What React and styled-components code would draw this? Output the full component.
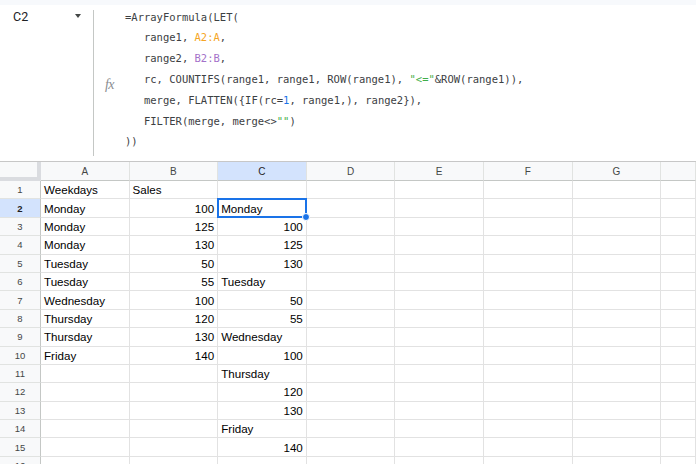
import React from "react";
import styled, { createGlobalStyle } from "styled-components";

const Global = createGlobalStyle`
  html, body { margin: 0; padding: 0; background: #fff; }
  body { width: 696px; height: 464px; overflow: hidden; font-family: "Liberation Sans", Arial, sans-serif; }
`;

const Page = styled.div`
  width: 696px;
  height: 464px;
  overflow: hidden;
  display: flex;
  flex-direction: column;
  background: #fff;
`;

const TopStrip = styled.div`
  height: 5px;
  background: #f7f9fc;
  flex: none;
`;

const FormulaBar = styled.div`
  height: 156px;
  flex: none;
  display: flex;
  align-items: stretch;
  background: #fff;
`;

const NameBox = styled.div`
  width: 93px;
  flex: none;
  display: flex;
  align-items: flex-start;
  justify-content: space-between;
  padding: 5px 12px 0 13px;
  box-sizing: border-box;
  font-family: "Roboto", "Liberation Sans", sans-serif;
  font-size: 12.5px;
  color: #202124;
  line-height: 14px;
`;

const Caret = styled.span`
  margin-top: 4px;
  width: 0;
  height: 0;
  border-left: 3.5px solid transparent;
  border-right: 3.5px solid transparent;
  border-top: 4px solid #444746;
`;

const Divider = styled.div`
  width: 1px;
  flex: none;
  margin: 5px 0 5px;
  background: #c4c7c5;
`;

const FxBox = styled.div`
  width: 31px;
  flex: none;
  display: flex;
  align-items: center;
  justify-content: center;
  padding-top: 3px;
  box-sizing: border-box;
  font-family: "Liberation Serif", "DejaVu Serif", serif;
  font-style: italic;
  font-size: 14px;
  color: #8a8d91;
  letter-spacing: -0.5px;
`;

const Formula = styled.pre`
  margin: 0;
  padding-top: 1.5px;
  font-family: "DejaVu Sans Mono", "Liberation Mono", monospace;
  font-size: 10.5px;
  line-height: 20.83px;
  color: #3c4043;
  white-space: pre;
`;

const Tok = styled.span`
  color: ${(p) =>
    p.$c === "orange" ? "#f5a524" : p.$c === "purple" ? "#a371c9" : p.$c === "green" ? "#3fae49" : p.$c === "blue" ? "#1a73e8" : "inherit"};
`;

const COLS = ["A", "B", "C", "D", "E", "F", "G", ""];

const Grid = styled.div`
  display: grid;
  grid-template-columns: 41px repeat(7, 88.6px) 1fr;
  grid-auto-rows: 18.4px;
  grid-template-rows: 19px;
  border-top: 1px solid #c7c7c7;
  font-family: "Liberation Sans", Arial, sans-serif;
`;

const Corner = styled.div`
  background: #f8f9fa;
  border-right: 4px solid #c4c7c5;
  border-bottom: 4px solid #c4c7c5;
  box-sizing: border-box;
  background-clip: padding-box;
  border-right-color: #dadce0;
  border-bottom-color: #dadce0;
  position: relative;
`;

const ColHead = styled.div`
  display: flex;
  align-items: center;
  justify-content: center;
  font-size: 10px;
  color: ${(p) => (p.$active ? "#0b57d0" : "#444746")};
  background: ${(p) => (p.$active ? "#d3e3fd" : "#f8f9fa")};
  border-right: 1px solid #e1e3e1;
  border-bottom: 1px solid #c4c7c5;
  box-sizing: border-box;
  ${(p) => (p.$active ? "color:#1f1f1f;" : "")}
`;

const RowHead = styled.div`
  display: flex;
  align-items: center;
  justify-content: center;
  font-size: 9.5px;
  font-weight: ${(p) => (p.$active ? 700 : 400)};
  color: ${(p) => (p.$active ? "#1f1f1f" : "#444746")};
  background: ${(p) => (p.$active ? "#d3e3fd" : "#f8f9fa")};
  border-right: 1px solid #c4c7c5;
  border-bottom: 1px solid #e1e3e1;
  box-sizing: border-box;
`;

const Cell = styled.div`
  position: relative;
  display: flex;
  align-items: center;
  justify-content: ${(p) => (p.$num ? "flex-end" : "flex-start")};
  padding: 0 3px 0 3px;
  font-size: 11.6px;
  color: #000;
  border-right: 1px solid #e2e2e2;
  border-bottom: 1px solid #e2e2e2;
  box-sizing: border-box;
  white-space: nowrap;
  overflow: visible;
`;

const Selection = styled.div`
  position: absolute;
  left: -1px;
  top: -1px;
  right: -1px;
  bottom: -1px;
  border: 2px solid #1a73e8;
  pointer-events: none;
  z-index: 2;
`;

const Handle = styled.div`
  position: absolute;
  right: -5px;
  bottom: -5px;
  width: 6px;
  height: 6px;
  border-radius: 50%;
  background: #1a73e8;
  border: 1px solid #fff;
  z-index: 3;
`;

const rows = [
  ["Weekdays", "Sales", ""],
  ["Monday", 100, "Monday"],
  ["Monday", 125, 100],
  ["Monday", 130, 125],
  ["Tuesday", 50, 130],
  ["Tuesday", 55, "Tuesday"],
  ["Wednesday", 100, 50],
  ["Thursday", 120, 55],
  ["Thursday", 130, "Wednesday"],
  ["Friday", 140, 100],
  ["", "", "Thursday"],
  ["", "", 120],
  ["", "", 130],
  ["", "", "Friday"],
  ["", "", 140],
  ["", "", ""],
];

export default function App() {
  return (
    <Page>
      <Global />
      <TopStrip />
      <FormulaBar>
        <NameBox>
          <span>C2</span>
          <Caret />
        </NameBox>
        <Divider />
        <FxBox>fx</FxBox>
        <Formula>
          {"=ArrayFormula(LET(\n"}
          {"   range1, "}<Tok $c="orange">A2:A</Tok>{",\n"}
          {"   range2, "}<Tok $c="purple">B2:B</Tok>{",\n"}
          {"   rc, COUNTIFS(range1, range1, ROW(range1), "}<Tok $c="green">"&lt;="</Tok>{"&ROW(range1)),\n"}
          {"   merge, FLATTEN({IF(rc="}<Tok $c="blue">1</Tok>{", range1,), range2}),\n"}
          {"   FILTER(merge, merge<>"}<Tok $c="green">""</Tok>{")\n"}
          {"))"}
        </Formula>
      </FormulaBar>
      <Grid>
        <Corner />
        {COLS.map((c, i) => (
          <ColHead key={i} $active={c === "C"}>{c}</ColHead>
        ))}
        {rows.map((r, ri) => (
          <React.Fragment key={ri}>
            <RowHead $active={ri === 1}>{ri + 1}</RowHead>
            {COLS.map((c, ci) => {
              const v = ci < 3 ? r[ci] : "";
              const sel = ri === 1 && ci === 2;
              return (
                <Cell key={ci} $num={typeof v === "number"}>
                  {v}
                  {sel && (
                    <Selection>
                      <Handle />
                    </Selection>
                  )}
                </Cell>
              );
            })}
          </React.Fragment>
        ))}
      </Grid>
    </Page>
  );
}
